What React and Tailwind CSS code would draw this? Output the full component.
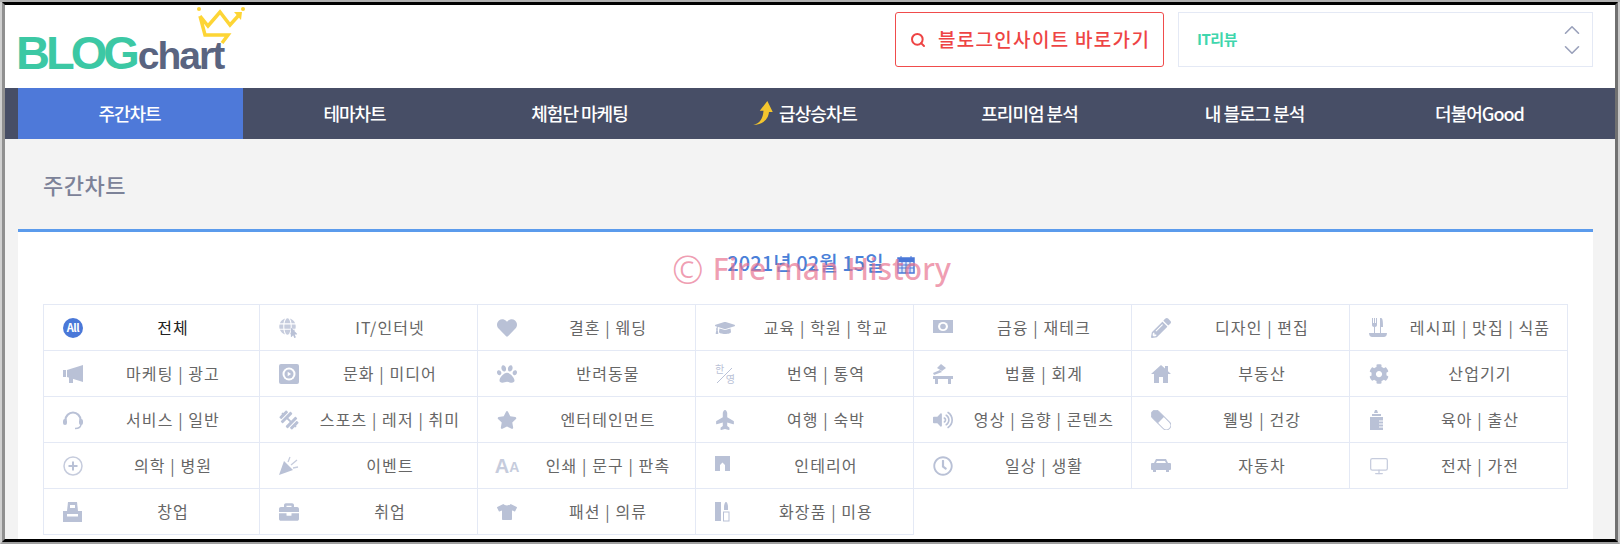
import React from 'react';
import { ChevronUp, ChevronDown, Search, Monitor } from 'lucide-react';
import {
  FaDumbbell, FaBriefcase, FaHeart, FaPaw, FaStar, FaGraduationCap, FaPlane, FaTshirt,
  FaPencilAlt, FaVolumeUp, FaCog, FaRegClock, FaGlobe, FaMousePointer,
} from 'react-icons/fa';

const tabs = ['주간차트', '테마차트', '체험단 마케팅', '급상승차트', '프리미엄 분석', '내 블로그 분석', '더불어Good'];

const Svg = ({ children }) => (
  <svg viewBox="0 0 20 20" className="w-5 h-5" fill="#b9c1d6">{children}</svg>
);

const iconBox = 'text-[#b9c1d6] text-[20px]';

const icons = {
  all: (
    <div className="w-5 h-5 rounded-full bg-[#4a78d8] text-white text-[11px] font-bold flex items-center justify-center tracking-[-0.5px]">All</div>
  ),
  it: (
    <div className="relative w-5 h-5 text-[#c6ccdd] text-[17px]">
      <FaGlobe />
      <FaMousePointer className="absolute right-0 bottom-0 text-[10px] text-[#b9c1d6] stroke-white" />
    </div>
  ),
  marketing: (
    <Svg>
      <rect x="0" y="6" width="3" height="7" />
      <path d="M4 6 20 1v17L4 13z" />
      <rect x="6" y="13" width="4" height="6" />
    </Svg>
  ),
  culture: (
    <Svg>
      <rect width="20" height="20" rx="2" />
      <circle cx="10" cy="10" r="6.500" fill="#fff" />
      <circle cx="10" cy="10" r="4.500" fill="#b9c1d6" />
      <path d="M8.700 7.800v4.400l3.400-2.200z" fill="#fff" />
    </Svg>
  ),
  service: (
    <Svg>
      <path d="M2.500 10a7.500 7.500 0 0 1 15 0" fill="none" stroke="#b9c1d6" strokeWidth="2.200" />
      <rect x="0" y="9" width="4" height="6" rx="2" />
      <rect x="16" y="9" width="4" height="6" rx="2" />
      <path d="M18 14c0 3-2 4.500-6 4.500" fill="none" stroke="#b9c1d6" strokeWidth="1.500" />
    </Svg>
  ),
  sports: <FaDumbbell className={`${iconBox} rotate-45`} />,
  medical: (
    <Svg>
      <circle cx="10" cy="10" r="9" fill="none" stroke="#c6ccdd" strokeWidth="1.500" />
      <path d="M10 5.500v9M5.500 10h9" stroke="#b9c1d6" strokeWidth="2" />
    </Svg>
  ),
  event: (
    <Svg>
      <path d="M0 19 5 5l9 9z" />
      <path d="M9 6l2-5M12 9l6-5M14 12l5-1" stroke="#c6ccdd" strokeWidth="1.300" fill="none" />
    </Svg>
  ),
  startup: (
    <Svg>
      <path d="M5 0h9l1 9H4z" />
      <rect x="7" y="3" width="5" height="3" fill="#fff" />
      <path d="M0 9h19v11H0z" />
      <rect x="4" y="12" width="11" height="2.500" fill="#fff" />
    </Svg>
  ),
  job: <FaBriefcase className={iconBox} />,
  wedding: <FaHeart className={iconBox} />,
  pet: <FaPaw className={iconBox} />,
  ent: <FaStar className={`${iconBox} text-[18px]`} />,
  print: (
    <div className="w-5 h-5 flex items-end justify-center font-bold leading-none text-[#c6ccdd] font-['Liberation_Sans',sans-serif]">
      <span className="text-[20px] leading-[19px]">A</span>
      <span className="text-[14px] leading-[17px]">A</span>
    </div>
  ),
  edu: <FaGraduationCap className={iconBox} />,
  trans: (
    <div className="relative w-5 h-5 text-[#b9c1d6] text-[10px] leading-none">
      <span className="absolute left-0 top-0">한</span>
      <span className="absolute right-0 bottom-0">영</span>
      <svg viewBox="0 0 20 20" className="absolute inset-0 w-5 h-5">
        <path d="M2 19 17 4" stroke="#b9c1d6" strokeWidth="1" />
      </svg>
    </div>
  ),
  travel: <FaPlane className={`${iconBox} -rotate-90`} />,
  interior: (
    <Svg>
      <path d="M0 0h15v15h-5V9L7.500 6.500 5 9v6H0z" />
    </Svg>
  ),
  fashion: <FaTshirt className={iconBox} />,
  cosmetic: (
    <Svg>
      <rect x="0" y="0" width="6" height="19" />
      <path d="M9 5c0-3 1-5 2-5s2 2 2 5v3H9z" />
      <rect x="8.500" y="10" width="5.500" height="9" fill="none" stroke="#b9c1d6" strokeWidth="1" />
    </Svg>
  ),
  finance: (
    <Svg>
      <rect x="0" y="2" width="20" height="13" />
      <ellipse cx="10" cy="8.500" rx="5" ry="4.500" fill="#fff" />
      <circle cx="10" cy="8.500" r="2.800" />
    </Svg>
  ),
  design: <FaPencilAlt className={`${iconBox} text-[19px]`} />,
  law: (
    <Svg>
      <path d="M8 0l5 4-4 3-5-3z" />
      <path d="M0 9 7 6l2 2-8 3z" />
      <path d="M0 12h20v3h-2v5h-3v-5H5v5H2v-5H0z" />
    </Svg>
  ),
  estate: (
    <Svg>
      <path d="M10 1l4 3.600V2h3v5.300L20 10h-3v9h-5v-6H8v6H3v-9H0z" />
    </Svg>
  ),
  sound: <FaVolumeUp className={iconBox} />,
  wellbeing: (
    <Svg>
      <g transform="rotate(45 10 10)">
        <rect x="-2" y="5.500" width="24" height="9" rx="4.500" fill="none" stroke="#b9c1d6" strokeWidth="1" />
        <path d="M2.500 5.500H10v9H2.500a4.500 4.500 0 0 1 0-9z" />
      </g>
    </Svg>
  ),
  daily: <FaRegClock className={`${iconBox} text-[18px]`} />,
  car: (
    <Svg>
      <path d="M5 3h10l2 4h2a1 1 0 0 1 1 1v5a1 1 0 0 1-1 1h-1v2h-3v-2H5v2H2v-2H1a1 1 0 0 1-1-1V8a1 1 0 0 1 1-1h2z" />
      <path d="M6 5h8l1 2H5z" fill="#fff" />
    </Svg>
  ),
  recipe: (
    <Svg>
      <path d="M3 0v7c0 1 1 2 2 2v6h1V9c1 0 2-1 2-2V0H7v5H6V0H5v5H4V0z" />
      <path d="M12 0c2 0 2 5 2 9h-2v6h-1V0z" />
      <path d="M0 15h18c0 3-2 4-3 4H3c-1 0-3-1-3-4z" />
    </Svg>
  ),
  industry: <FaCog className={iconBox} />,
  baby: (
    <Svg>
      <path d="M6 0h2l1 3H5z" />
      <path d="M3 4h9v2H3z" />
      <path d="M1 7h13v13H1z" />
      <path d="M10 11h4M10 14h4M10 17h4" stroke="#fff" strokeWidth="1" />
    </Svg>
  ),
  electronics: <Monitor className="w-5 h-5 text-[#c6ccdd]" strokeWidth={1.500} />,
};

const categories = [
  ['all', '전체'], ['it', 'IT/인터넷'], ['wedding', '결혼 | 웨딩'], ['edu', '교육 | 학원 | 학교'], ['finance', '금융 | 재테크'], ['design', '디자인 | 편집'], ['recipe', '레시피 | 맛집 | 식품'],
  ['marketing', '마케팅 | 광고'], ['culture', '문화 | 미디어'], ['pet', '반려동물'], ['trans', '번역 | 통역'], ['law', '법률 | 회계'], ['estate', '부동산'], ['industry', '산업기기'],
  ['service', '서비스 | 일반'], ['sports', '스포츠 | 레저 | 취미'], ['ent', '엔터테인먼트'], ['travel', '여행 | 숙박'], ['sound', '영상 | 음향 | 콘텐츠'], ['wellbeing', '웰빙 | 건강'], ['baby', '육아 | 출산'],
  ['medical', '의학 | 병원'], ['event', '이벤트'], ['print', '인쇄 | 문구 | 판촉'], ['interior', '인테리어'], ['daily', '일상 | 생활'], ['car', '자동차'], ['electronics', '전자 | 가전'],
  ['startup', '창업'], ['job', '취업'], ['fashion', '패션 | 의류'], ['cosmetic', '화장품 | 미용'],
];

const Logo = () => (
  <div className="relative w-[240px] h-[76px] font-['Liberation_Sans',sans-serif]">
    <svg viewBox="195 5 55 45" className="absolute left-[177px] top-0 w-[55px] h-[45px]">
      <circle cx="199" cy="9" r="2" fill="#fdd535" />
      <circle cx="243" cy="9" r="2" fill="#fdd535" />
      <path d="M200 16 205 35H228L222 43M200 16 208 26 220 12 230 25 239 15" fill="none" stroke="#fdd535" strokeWidth="3.500" />
      <path d="M234 12h8l-1 8z" fill="#fdd535" />
    </svg>
    <div className="absolute left-[-2px] bottom-[5px] flex items-baseline leading-none">
      <span className="text-[47px] font-bold text-[#3cc8a4] tracking-[-4px]">BLOG</span>
      <span className="text-[39px] font-bold text-[#5a6480] tracking-[-2px] ml-[2px]">chart</span>
    </div>
  </div>
);

export default function App() {
  return (
    <div className="w-[1620px] h-[544px] overflow-hidden flex flex-col bg-[#999] font-['Noto_Sans_CJK_KR','Noto_Sans',sans-serif]">
      <div className="h-[2px] bg-[#b0b0b0] shrink-0" />
      <div className="flex-1 min-h-0 flex border-l-2 border-l-[#d0d0d0] border-r-2 border-r-[#c8c8c8] border-b-2 border-b-[#a0a0a0]">
        <div className="flex-1 min-w-0 flex flex-col border-l-[3px] border-l-[#909090] border-r-[3px] border-r-[#707070] border-t-[3px] border-t-black border-b-[3px] border-b-black bg-white">
          {/* Header */}
          <div className="h-[83px] shrink-0 flex justify-between pl-[13px] pr-[22px]">
            <Logo />
            <div className="flex gap-[14px] pt-[7px]">
              <button className="w-[269px] h-[55px] border border-[#f04c4c] rounded-[3px] flex items-center pl-[14px] text-[#ee4444] text-[19px] font-medium tracking-[1.300px]">
                <Search className="w-4 h-4 mr-[12px]" strokeWidth={3} />
                블로그인사이트 바로가기
              </button>
              <div className="w-[415px] h-[55px] border border-[#e4e9f5] flex items-center justify-between pl-[18px] pr-[7px]">
                <span className="text-[#3fd6ad] text-[15px] font-bold tracking-[-0.5px]">IT리뷰</span>
                <div className="flex flex-col text-[#9aa1bb]">
                  <ChevronUp className="w-[26px] h-[26px] -my-[3px]" strokeWidth={1.500} />
                  <ChevronDown className="w-[26px] h-[26px] -my-[3px]" strokeWidth={1.500} />
                </div>
              </div>
            </div>
          </div>

          {/* Nav */}
          <div className="h-[51px] shrink-0 bg-[#474e66] flex pl-[13px]">
            {tabs.map((tab, index) => (
              <div
                key={tab}
                className={`w-[225px] flex items-center justify-center pb-[1px] pr-[2px] text-white text-[18px] font-medium tracking-[-1px] ${index === 0 ? 'bg-[#4e79d9]' : ''}`}
              >
                {index === 3 && (
                  <svg viewBox="0 0 20 24" className="w-[22px] h-[26px] mr-[5px]">
                    <path d="M1 23C7 22 10 17 10.500 10H7L14 1 19 11H15.500C15 18 9 23 1 23z" fill="#f3c52e" />
                  </svg>
                )}
                {tab}
              </div>
            ))}
          </div>

          {/* Content */}
          <div className="flex-1 min-h-0 flex flex-col bg-[#f3f3f3] pl-[13px] pr-[22px]">
            <div className="h-[90px] shrink-0 flex items-center pl-[25px] text-[#7c8298] text-[22px] font-medium tracking-[0.5px]">
              주간차트
            </div>
            <div className="flex-1 min-h-0 bg-white border-t-[3px] border-t-[#5b9bec] px-[25px]">
              <div className="relative h-[72px] flex items-center justify-center pb-[10px] text-[#4a80d8] text-[20px] font-medium tracking-[0.1px]">
                <span className="relative">
                  2021년 02월 15일
                  <svg viewBox="0 0 18 18" className="absolute left-full top-[8px] w-[18px] h-[18px] ml-[13px]">
                    <rect x="1" y="2" width="16" height="15" fill="#dfe8f8" stroke="#4a78d8" strokeWidth="1.500" />
                    <rect x="1" y="2" width="16" height="4" fill="#4a78d8" />
                    <path d="M4 0v3M14 0v3M1 9h16M1 12h16M5 6v11M9 6v11M13 6v11" stroke="#4a78d8" strokeWidth="1" />
                  </svg>
                </span>
                <div className="absolute left-[629px] top-[17px] flex items-center gap-[9px] text-[#e8738f]/70 text-[30px] leading-[40px] font-['Noto_Sans',sans-serif] whitespace-nowrap">
                  <span className="text-[38px] font-light">©</span>
                  <span>Fire man History</span>
                </div>
              </div>

              <div className="grid grid-cols-[216px_repeat(6,218px)] grid-rows-[repeat(5,46px)] w-fit border-l border-t border-[#e4e9f5] relative">
                {categories.map(([icon, label], index) => (
                  <div key={icon} className="flex items-center pl-[19px] border-r border-b border-[#e4e9f5] bg-white">
                    <div className="w-5 h-5 shrink-0 flex items-center justify-center">{icons[icon]}</div>
                    <div className={`flex-1 text-center pl-[4px] pb-[2px] text-[16px] tracking-[1.100px] ${index === 0 ? 'text-[#222]' : 'text-[#666]'}`}>
                      {label}
                    </div>
                  </div>
                ))}
              </div>
            </div>
          </div>
        </div>
      </div>
    </div>
  );
}
